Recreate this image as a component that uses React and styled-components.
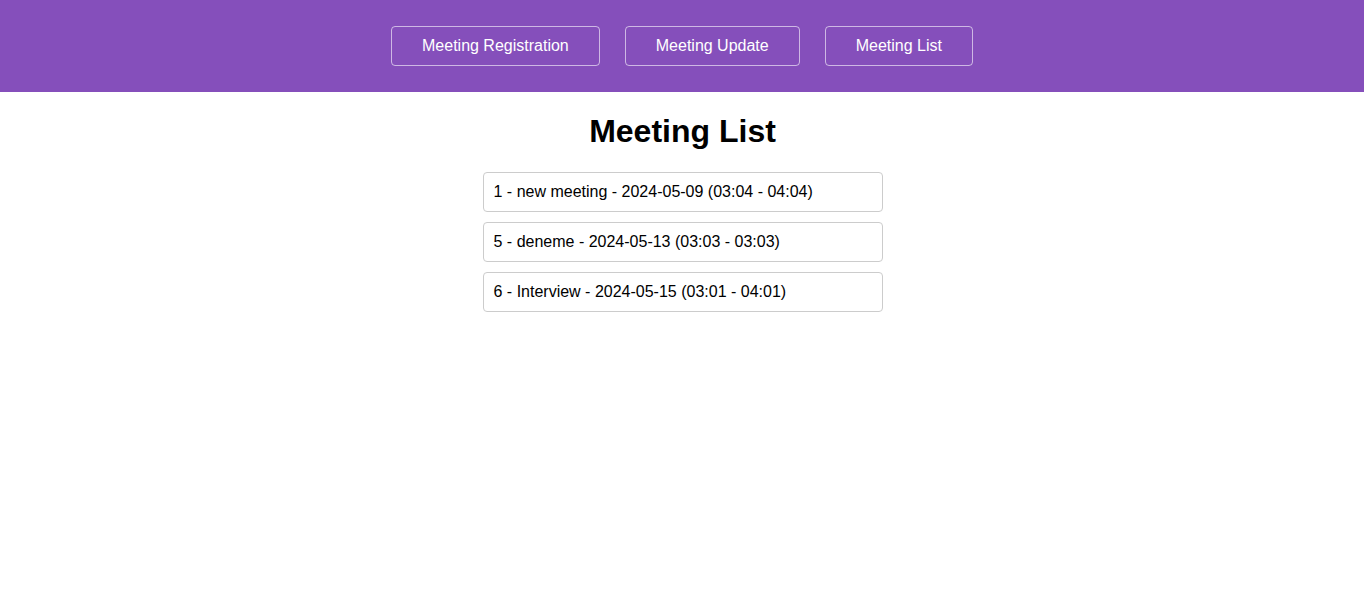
import React from 'react';
import styled, { createGlobalStyle } from 'styled-components';

const GlobalStyle = createGlobalStyle`
  body {
    margin: 0;
    font-family: Arial, "Liberation Sans", sans-serif;
    background: #fff;
    color: #000;
  }
`;

const Header = styled.nav`
  background: #854fbb;
  display: flex;
  justify-content: center;
  gap: 25px;
  padding: 26px 0;
`;

const NavButton = styled.button`
  background: transparent;
  border: 1px solid rgba(255, 255, 255, 0.6);
  border-radius: 4px;
  color: #fff;
  font-family: inherit;
  font-size: 16px;
  line-height: 18px;
  padding: 10px 30px;
  cursor: pointer;
`;

const Main = styled.main`
  display: flex;
  flex-direction: column;
  align-items: center;
  padding-left: 1px;
`;

const Title = styled.h1`
  font-size: 32px;
  margin: 21px 0 22px;
  line-height: 37px;
`;

const List = styled.ul`
  list-style: none;
  margin: 0;
  padding: 0;
  width: 400px;
  display: flex;
  flex-direction: column;
  gap: 10px;
`;

const Item = styled.li`
  border: 1px solid #ccc;
  border-radius: 4px;
  padding: 10px;
  font-size: 16px;
  line-height: 18px;
`;

const meetings = [
  { id: 1, name: 'new meeting', date: '2024-05-09', start: '03:04', end: '04:04' },
  { id: 5, name: 'deneme', date: '2024-05-13', start: '03:03', end: '03:03' },
  { id: 6, name: 'Interview', date: '2024-05-15', start: '03:01', end: '04:01' },
];

const App = () => {
  return (
    <>
      <GlobalStyle />
      <Header>
        <NavButton>Meeting Registration</NavButton>
        <NavButton>Meeting Update</NavButton>
        <NavButton>Meeting List</NavButton>
      </Header>
      <Main>
        <Title>Meeting List</Title>
        <List>
          {meetings.map((m) => (
            <Item key={m.id}>
              {m.id} - {m.name} - {m.date} ({m.start} - {m.end})
            </Item>
          ))}
        </List>
      </Main>
    </>
  );
};

export default App;
